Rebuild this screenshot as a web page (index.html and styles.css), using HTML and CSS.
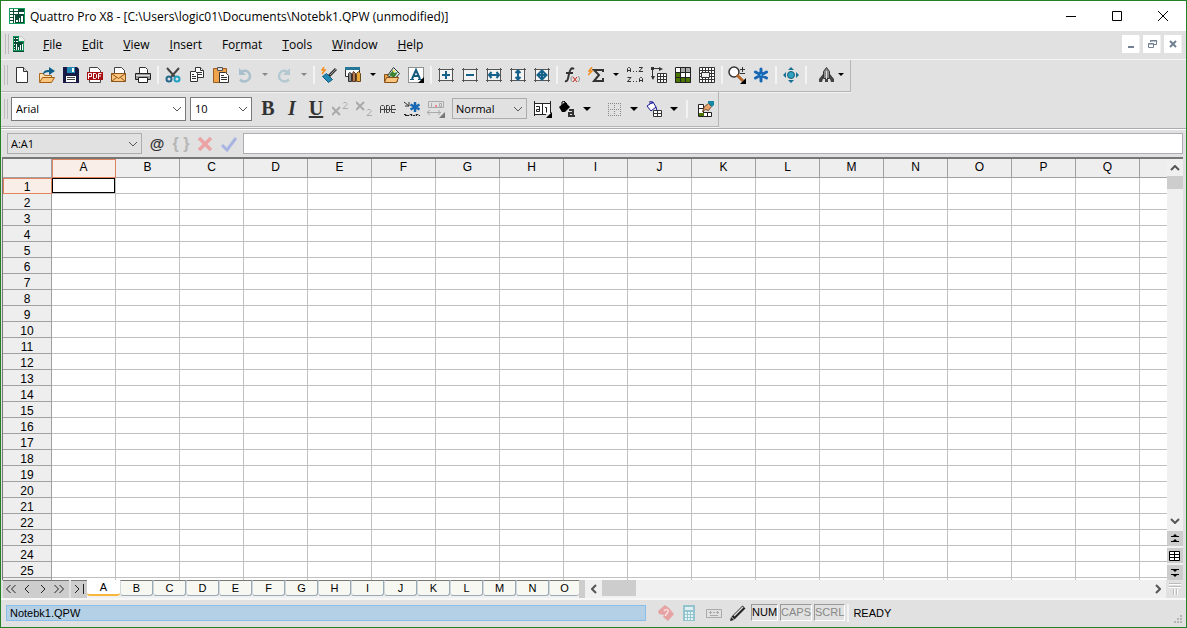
FILE: index.html
```html
<!DOCTYPE html>
<html lang="en">
<head>
<meta charset="utf-8">
<title>Quattro Pro X8</title>
<link rel="stylesheet" href="styles.css">
</head>
<body>
<div class="window">
  <header class="titlebar">
    <svg class="app-icon" viewBox="0 0 16 16" aria-hidden="true"><path fill="#14a05c" d="M0 0h16v16H0z"/><path fill="#0b4a35" d="M1 1h14v14H1z"/><path fill="#fff" d="M1 1h3v2H1zM5 1h4v2H5zM1 4h3v2H1zM5 4h4v2H5zM1 7h3v2H1zM1 10h3v2H1zM1 13h3v2H1zM5 7h1v8H5zM10 4h5v2h-5z"/><path fill="#fff" d="M7 12h2v2H7zM10 10h1v4h-1zM12 8h2v6h-2z"/></svg>
    <h1 class="title">Quattro Pro X8 - [C:\Users\logic01\Documents\Notebk1.QPW (unmodified)]</h1>
    <div class="caption-buttons">
      <button aria-label="Minimize"><svg viewBox="0 0 12 12"><path stroke="#000" d="M1 6.500h10"/></svg></button>
      <button aria-label="Maximize"><svg viewBox="0 0 12 12"><path fill="none" stroke="#000" d="M1.500 1.500h9v9h-9z"/></svg></button>
      <button aria-label="Close"><svg viewBox="0 0 12 12"><path stroke="#000" d="M1 1l10 10M11 1L1 11"/></svg></button>
    </div>
  </header>

  <nav class="menubar" aria-label="Menu">
    <span class="grip"></span>
    <svg class="doc-icon" viewBox="0 0 14 16" aria-hidden="true"><path fill="#eee" stroke="#c4c4c4" d="M6.500.500h3l3 3v3h-6z"/><path fill="#0b4a35" d="M1 0h6v5h5v11H1z"/><path fill="#fff" d="M2 2h1v1H2zM4 2h2v1H4zM2 5h1v1H2zM4 5h2v1H4zM2 8h1v1H2zM2 11h1v1H2zM2 13h1v1H2zM4 8h1v6H4zM6 11h1v3H6zM8 9h1v5H8zM10 8h1v6h-1z"/><path fill="none" stroke="#0c9a58" d="M1.500.500h5v5h5v9h-10z"/></svg>
    <div class="menus">
      <button><u>F</u>ile</button><button><u>E</u>dit</button><button><u>V</u>iew</button><button><u>I</u>nsert</button><button>Fo<u>r</u>mat</button><button><u>T</u>ools</button><button><u>W</u>indow</button><button><u>H</u>elp</button>
    </div>
    <div class="mdi-buttons">
      <button aria-label="Minimize notebook"><svg viewBox="0 0 12 12"><path fill="#718093" d="M3 8h6v2H3z"/></svg></button>
      <button aria-label="Restore notebook"><svg viewBox="0 0 12 12"><path fill="none" stroke="#718093" d="M4.500 4V2.500h6v4H8M4 3h7M2.500 5.500h5v4h-5zM2 6h6"/></svg></button>
      <button aria-label="Close notebook"><svg viewBox="0 0 12 12"><path stroke="#718093" stroke-width="2" d="M3 3l6 6M9 3L3 9"/></svg></button>
    </div>
  </nav>

  <div class="bars">
  <div class="toolbar standard" role="toolbar" aria-label="Notebook">
    <span class="grip"></span>
    <button aria-label="New"><svg viewBox="0 0 16 16"><path fill="#fff" stroke="#333" d="M1.500.500h7l4 4v11h-11z"/><path fill="#ddd" stroke="#333" d="M8.500.500v4h4"/></svg></button>
    <button aria-label="Open"><svg viewBox="0 0 16 16"><path fill="#ffe0b0" stroke="#b06a1c" d="M.500 14.500v-8h4l1 2h7v6z"/><path fill="#fbc57e" stroke="#a55d12" d="M.500 15.500l3-5h12l-3 5z"/><path fill="#0e5f8a" d="M4 8c0-4 2-5 6-5V0l6 4-6 4V5C7 5 5 6 4 8z"/></svg></button>
    <button aria-label="Save"><svg viewBox="0 0 16 16"><path fill="#171a45" d="M0 0h14l2 2v14H0z"/><path fill="#2589b5" d="M4 0h8v6H4z"/><path fill="#fff" d="M9 1h2v4H9zM3 9h10v6H3z"/><path stroke="#444" d="M4 10.500h8M4 12.500h8"/></svg></button>
    <button aria-label="Publish to PDF"><svg viewBox="0 0 16 16"><path fill="#fff" stroke="#444" d="M2.500.500h8l3 3v12h-11z"/><path fill="#a80f12" d="M0 5h16v8H0z"/><path fill="none" stroke="#fff" d="M1.500 12V6.500h3v3h-3M6.500 6v5.500h2l1-1v-3l-1-1h-2M11.500 12V6.500h3M11 9h3"/></svg></button>
    <button aria-label="E-mail"><svg viewBox="0 0 16 16"><path fill="#fff" stroke="#444" d="M3.500.500h7l3 3v10h-10z"/><path fill="#ffc47c" stroke="#8c551b" d="M.500 6.500h14v8H.500z"/><path fill="none" stroke="#8c551b" d="M.500 6.500l7 5 7-5M.500 14.500l5-4M14.500 14.500l-5-4"/></svg></button>
    <button aria-label="Print"><svg viewBox="0 0 16 16"><path fill="#fff" stroke="#333" d="M4.500.500h6l2 2v5h-8z"/><path fill="#999" stroke="#222" d="M.500 6.500h15v6H.500z"/><path stroke="#ddd" d="M1 8.500h14"/><path fill="#fff" stroke="#222" d="M3.500 10.500h9v5h-9z"/></svg></button>
    <span class="sep"></span>
    <button aria-label="Cut"><svg viewBox="0 0 16 16"><path stroke="#444" stroke-width="2" d="M2 1l8 9M14 1L6 10"/><g fill="none" stroke-width="2"><circle cx="4" cy="12" r="2.500" stroke="#24688c"/><circle cx="12" cy="12" r="2.500" stroke="#1fa0c5"/></g></svg></button>
    <button aria-label="Copy"><svg viewBox="0 0 16 16"><g fill="#fff" stroke="#333"><path d="M6.500.500h5l3 3v7h-8z"/><path d="M8 5.500h5M8 7.500h5M11.500.500v3h3"/><path d="M1.500 4.500h5l2 2v8h-7z"/><path d="M3 7.500h2M3 9.500h4M3 11.500h4"/></g></svg></button>
    <button aria-label="Paste"><svg viewBox="0 0 16 16"><path fill="#efa34b" stroke="#9b5a20" d="M.500 1.500h13v14H.500z"/><path fill="#ddd" stroke="#555" d="M4.500.500h5v3h-5z"/><path fill="#fff" stroke="#333" d="M6.500 5.500h6l3 3v7h-9z"/><path stroke="#333" d="M8 8.500h3M8 10.500h6M8 12.500h6"/></svg></button>
    <button aria-label="Undo" disabled><svg viewBox="0 0 16 16"><path fill="none" stroke="#a9c0cc" stroke-width="2.500" d="M5 4.500c5-2 8 1 8 5 0 3-3 5-6 5-2 0-3-1-4-2"/><path fill="#a9c0cc" d="M2 1v7h7z"/></svg></button>
    <button class="caret" aria-label="Undo list" disabled><svg viewBox="0 0 8 4"><path fill="#888" d="M1 0h6L4 3z"/></svg></button>
    <button aria-label="Redo" disabled><svg viewBox="0 0 16 16"><path fill="none" stroke="#b4c8d2" stroke-width="2.500" d="M11 4.500c-5-2-8 1-8 5 0 3 3 5 6 5 2 0 3-1 4-2"/><path fill="#b4c8d2" d="M14 1v7H7z"/></svg></button>
    <button class="caret" aria-label="Redo list" disabled><svg viewBox="0 0 8 4"><path fill="#888" d="M1 0h6L4 3z"/></svg></button>
    <span class="sep"></span>
    <button aria-label="QuickFormat"><svg viewBox="0 0 16 16"><path stroke="#333" stroke-width="3" d="M8 9l7-7"/><path stroke="#999" d="M9 8l6-6"/><path fill="#2589b5" stroke="#155c80" d="M1.500 9.500l4-3 6 6-4 3z"/><path fill="none" stroke="#f28c1c" stroke-width="1.500" d="M3 0L1 3h3L1 7"/></svg></button>
    <button aria-label="Insert chart"><svg viewBox="0 0 16 16"><path fill="#fff" stroke="#333" d="M.500.500h14v9H.500z"/><path fill="#257895" d="M0 0h15v3H0z"/><path fill="#888" stroke="#333" d="M3.500 14.500v-8l1-1 2 1v8z"/><path fill="#b07a52" stroke="#54301c" d="M7.500 14.500v-8l1-2 2 2v8z"/><path fill="#eba83b" stroke="#644c20" d="M11.500 14.500v-8l2-2 2 2v8z"/></svg></button>
    <button class="caret" aria-label="Chart list"><svg viewBox="0 0 8 4"><path d="M1 0h6L4 3z"/></svg></button>
    <button aria-label="Insert graphic"><svg viewBox="0 0 16 16"><path fill="#efa34b" stroke="#855018" d="M.500 14.500v-7h4l1 2h8v5z"/><path fill="#d9eef0" stroke="#333" d="M3.500 8.500l6-8 6 6-5 6z"/><path fill="#418335" d="M5 8l4-5 1 3 4-1-4 6z"/><path fill="#f3e34b" d="M9 3h2v2H9z"/><path fill="#fbc57e" stroke="#855018" d="M.500 15.500l2-5h12l-2 5z"/></svg></button>
    <button aria-label="Text box"><svg viewBox="0 0 16 16"><path fill="#fff" stroke="#333" stroke-dasharray="1 1" d="M.500.500h15v15H.500z"/><path fill="none" stroke="#155c80" stroke-width="2" d="M4 12l4-9 4 9M5 9h6"/><path stroke="#155c80" d="M2 12.500h4M10 12.500h4"/><path d="M16 10v6h-6z"/></svg></button>
    <span class="sep"></span>
    <button aria-label="Insert cells"><svg viewBox="0 0 16 16"><path class="frame" d="M0 2.500h16M0 13.500h16M1.500 1v14M14.500 1v14"/><path class="face" d="M2 3h12v10H2z"/><path class="mark" d="M4 8h8M8 4v8"/></svg></button>
    <button aria-label="Delete cells"><svg viewBox="0 0 16 16"><path class="frame" d="M0 2.500h16M0 13.500h16M1.500 1v14M14.500 1v14"/><path class="face" d="M2 3h12v10H2z"/><path class="mark" d="M4 8h8"/></svg></button>
    <button aria-label="Fit column"><svg viewBox="0 0 16 16"><path class="frame" d="M0 2.500h16M0 13.500h16M1.500 1v14M14.500 1v14"/><path class="face" d="M2 3h12v10H2z"/><path class="mark" d="M3 8h10M5.500 5L3 8l2.500 3M10.500 5L13 8l-2.500 3"/></svg></button>
    <button aria-label="Fit row"><svg viewBox="0 0 16 16"><path class="frame" d="M0 2.500h16M0 13.500h16M1.500 1v14M14.500 1v14"/><path class="face" d="M2 3h12v10H2z"/><path class="mark" d="M8 3v10M5.500 6L8 3.500l2.500 2.500M5.500 10L8 12.500l2.500-2.500"/></svg></button>
    <button aria-label="Fit all"><svg viewBox="0 0 16 16"><path class="frame" d="M0 2.500h16M0 13.500h16M1.500 1v14M14.500 1v14"/><path class="face" d="M2 3h12v10H2z"/><path class="mark" d="M3 8h10M8 3v10M3.500 8L8 3.500l4.500 4.500L8 12.500z"/></svg></button>
    <span class="sep"></span>
    <button aria-label="Formula composer"><svg viewBox="0 0 16 16"><path fill="none" stroke="#333" stroke-width="2" d="M10 2C7 0 6 3 5 7s-1 8-4 7M2 6h7"/><path stroke="#c21" fill="none" d="M9 10l4 5M13 10l-4 5"/><path stroke="#888" fill="none" d="M8.500 9c-2 2-2 4 0 6M14 9c2 2 2 4 0 6"/></svg></button>
    <button aria-label="QuickSum"><svg viewBox="0 0 16 16"><path fill="none" stroke="#333" stroke-width="2" d="M15 5V3H6l5 5-5 6h9v-3"/><path fill="none" stroke="#f28c1c" stroke-width="1.500" d="M4 0L1 4h3L0 8"/></svg></button>
    <button class="caret" aria-label="Sum list"><svg viewBox="0 0 8 4"><path d="M1 0h6L4 3z"/></svg></button>
    <button aria-label="Sort"><svg viewBox="0 0 16 16"><path fill="none" stroke="#333" d="M.500 5V1.500l1-1h1l1 1V5M1 3.500h3M12 .500h3.500L12 4.500h4M.500 10.500H4L.500 14.500H4M12.500 15v-3.500l1-1h1l1 1V15M13 13.500h3M6 4.500h1M9 4.500h1M6 14.500h1M9 14.500h1"/></svg></button>
    <button aria-label="SpeedFill"><svg viewBox="0 0 16 16"><path fill="#fff" stroke="#333" d="M6.500 6.500h9v9h-9zM9.500 6.500v9M12.500 6.500v9M6.500 9.500h9M6.500 12.500h9"/><path fill="none" stroke="#333" d="M1.500 12V1.500H9"/><path fill="#333" d="M8 0l4 2-4 2zM0 9h4l-2 4zM0 0h3v3H0z"/></svg></button>
    <button aria-label="SpeedFormat"><svg viewBox="0 0 16 16"><path fill="#fff" d="M0 0h16v16H0z"/><path fill="#aaa" d="M6 0h10v5H6z"/><path fill="#4c7500" d="M0 5h5v11H0zM5 11h11v5H5z"/><path fill="none" stroke="#222" d="M.500.500h15v15H.500zM5.500 0v16M10.500 0v16M0 5.500h16M0 10.500h16"/></svg></button>
    <button aria-label="QuickCell"><svg viewBox="0 0 16 16"><path fill="#fff" stroke="#333" d="M.500.500h15v15H.500zM3.500 0v16M6.500 0v16M9.500 0v16M12.500 0v16M0 3.500h16M0 12.500h16M0 6.500h16M0 9.500h16"/><path fill="#eee" stroke="#333" d="M2.500 5.500h8v5h-8z"/></svg></button>
    <span class="sep"></span>
    <button aria-label="Zoom"><svg class="wide" viewBox="0 0 18 18"><circle cx="6" cy="6" r="5" fill="#fff" stroke="#333" stroke-width="1.500"/><path stroke="#b5682a" stroke-width="3" d="M9 9l6 6"/><path d="M18 12v6h-6z"/><path stroke="#333" d="M12 3.500h5M14.500 1v5M12 7.500h5"/></svg></button>
    <button aria-label="Favorites"><svg viewBox="0 0 16 16"><path stroke="#1767b5" stroke-width="3" stroke-linecap="round" d="M8 2v12M2.500 5l11 6M13.500 5l-11 6"/><path fill="#38a0dd" d="M7 7h2v2H7z"/></svg></button>
    <span class="sep"></span>
    <button aria-label="Browse"><svg viewBox="0 0 16 16"><circle cx="8" cy="8" r="3.500" fill="#2fa0c0" stroke="#175e78"/><path fill="#176f91" d="M5 3l3-3 3 3zM5 13l3 3 3-3zM3 5L0 8l3 3zM13 5l3 3-3 3z"/></svg></button>
    <span class="sep"></span>
    <button class="rocket" aria-label="Launch"><svg viewBox="0 0 26 16"><path fill="#888" stroke="#333" d="M4.500 11.500v-7l3-4 3 4v7z"/><path stroke="#ddd" d="M7.500 4v8"/><path fill="#444" d="M4 7v5l-1 3H0v-3zM11 7v5l1 3h3v-3zM6 12h3v3H6z"/><path d="M19 6h6l-3 3z"/></svg></button>
  </div>

  <div class="toolbar property" role="toolbar" aria-label="Property bar">
    <span class="grip"></span>
    <label class="combo font-combo"><select aria-label="Font"><option>Arial</option></select><svg viewBox="0 0 10 6"><path d="M1 1l4 4 4-4"/></svg></label>
    <label class="combo size-combo"><select aria-label="Font size"><option>10</option></select><svg viewBox="0 0 10 6"><path d="M1 1l4 4 4-4"/></svg></label>
    <div class="tools">
    <button class="letter" aria-label="Bold"><b>B</b></button>
    <button class="letter" aria-label="Italic"><i>I</i></button>
    <button class="letter" aria-label="Underline"><u>U</u></button>
    <button aria-label="Superscript" disabled><svg viewBox="0 0 16 16"><path fill="none" stroke="#aaa" stroke-width="2" d="M0 6l8 8M8 6l-8 8"/><path fill="none" stroke="#aaa" d="M11 2.500l1-1h2l1 1v1l-4 4h5"/></svg></button>
    <button aria-label="Subscript" disabled><svg viewBox="0 0 16 16"><path fill="none" stroke="#aaa" stroke-width="2" d="M0 1l8 8M8 1l-8 8"/><path fill="none" stroke="#aaa" d="M11 9.500l1-1h2l1 1v1l-4 4h5"/></svg></button>
    <button aria-label="Strikethrough"><svg viewBox="0 0 16 16"><path fill="none" stroke="#444" d="M.500 12V5.500l1-1h2l1 1V12M6.500 4v7.500h2l1-1v-5l-1-1h-2M15 4.500h-3.500v7H15M0 8.500h16"/></svg></button>
    <button aria-label="QuickStyle"><svg viewBox="0 0 16 16"><path stroke="#1767b5" stroke-width="2.500" d="M11 1v10M6.500 3.500l9 5M15.500 3.500l-9 5"/><path fill="none" stroke="#333" d="M0 1l5 4M5 1v4H1"/><path fill="none" stroke="#222" d="M0 13.500h2l1 1h2l1-1h2l1 1h2l1-1h2l1 1h1M1 14.500h2M7 14.500h1M12 14.500h1"/></svg></button>
    <button aria-label="Numeric format" disabled><svg class="wide" viewBox="0 0 18 18"><path fill="none" stroke="#aaa" d="M1.500 1.500h15v6h-15zM4.500 3v4M12.500 3.500h2v3h-2zM0 12.500h14M3 10l-3 2.500L3 15M12 10v5"/><path fill="#777" d="M18 12v6h-6z"/><path fill="#e88" d="M8 5h2v2H8z"/></svg></button>
    </div>
    <label class="combo style-combo"><select aria-label="Style"><option>Normal</option></select><svg viewBox="0 0 10 6"><path d="M1 1l4 4 4-4"/></svg></label>
    <div class="tools alignment">
    <button aria-label="Align"><svg class="wide" viewBox="0 0 18 18"><path fill="#fff" d="M1 3h15v11H1z"/><path fill="none" stroke="#222" d="M.500 1v15M16.500 1v12M8.500 3v11M0 3.500h17M0 14.500h12M2 6.500h3.500v5H2.500v-2h3M11 7.500h1.500v5"/><path d="M18 12v6h-6z"/></svg></button>
    <button aria-label="Text color"><svg viewBox="0 0 16 16"><path d="M0 6l6-5 5 5-5 5H3z"/><path fill="none" stroke="#000" d="M3 4V1l2-1 3 3M2 6l3-3"/><path fill="none" stroke="#333" stroke-width="2" d="M10 9h4v6h-4v-3h4M15 15h1"/></svg></button>
    <button class="caret" aria-label="Text color list"><svg viewBox="0 0 8 4"><path d="M0 0h8L4 4z"/></svg></button>
    </div>
    <div class="tools">
    <button aria-label="Borders"><svg viewBox="0 0 16 16"><path fill="none" stroke="#888" stroke-dasharray="1 1" d="M2 2.500h13M2 8.500h13M2 14.500h13M2.500 2v13M8.500 2v13M14.500 2v13"/></svg></button>
    <button class="caret" aria-label="Border list"><svg viewBox="0 0 8 4"><path d="M0 0h8L4 4z"/></svg></button>
    <button class="fill-button" aria-label="Fill color"><svg viewBox="0 0 16 16"><path fill="#fff" stroke="#151594" d="M1 5l6-4 3 5-5 4zM4 3V0h2v3M10 6l1 4"/><path fill="#fff" stroke="#333" d="M7.500 9.500h8v6h-8zM11.500 9v7M7 12.500h9"/></svg></button>
    <button class="caret" aria-label="Fill list"><svg viewBox="0 0 8 4"><path d="M0 0h8L4 4z"/></svg></button>
    <span class="sep"></span>
    <button aria-label="Cell properties"><svg viewBox="0 0 16 16"><path fill="#fff" stroke="#222" d="M.500 3.500h5v12h-5zM5.500 11.500h8v4h-8zM.500 7.500h5M9.500 11v5"/><path fill="#4c7500" d="M1 12h5v3H1z"/><path fill="#e5a56c" stroke="#77492f" d="M4.500 10.500l2-5 4-3 3 3-3 4-3-1z"/><path fill="#1588a5" d="M10 0h6v4l-2 2-4-4z"/></svg></button>
    </div>
  </div>
  </div>

  <div class="formula-bar">
    <label class="combo name-combo"><select aria-label="Cell address"><option>A:A1</option></select><svg viewBox="0 0 10 6"><path d="M1 1l4 4 4-4"/></svg></label>
    <div class="tools">
    <button class="at" aria-label="Functions">@</button>
    <button class="braces" aria-label="Macros" disabled>{ }</button>
    <button aria-label="Cancel" disabled><svg viewBox="0 0 16 16"><path stroke="#eba3a3" stroke-width="3.500" d="M2 2l12 12M14 2L2 14"/></svg></button>
    <button aria-label="Enter" disabled><svg viewBox="0 0 16 16"><path fill="none" stroke="#a8b5e2" stroke-width="3" d="M1 9l5 5 9-12"/></svg></button>
    </div>
    <input class="entry" type="text" aria-label="Cell contents">
  </div>

  <main class="sheet">
    <div class="grid-clip"><table class="grid" id="grid" aria-label="Sheet A"></table></div>
    <div class="vscroll">
      <button aria-label="Scroll up"><svg viewBox="0 0 10 6"><path d="M1 5l4-4 4 4"/></svg></button>
      <div class="vtrack"><div class="vthumb"></div></div>
      <button aria-label="Scroll down"><svg viewBox="0 0 10 6"><path d="M1 1l4 4 4-4"/></svg></button>
      <button class="jump" aria-label="Previous object"><svg viewBox="0 0 12 12"><path fill="#000" d="M6 1l2 2H4zM2 3h8v1H2zM6 6l2 2H4zM2 8h8v1H2z"/></svg></button>
      <button class="jump" aria-label="Browse by"><svg viewBox="0 0 12 12"><path class="table-glyph" d="M.500 1.500h10v9H.500zM5.500 1v10M0 4.500h11M0 7.500h11"/></svg></button>
      <button class="jump" aria-label="Next object"><svg viewBox="0 0 12 12"><path fill="#000" d="M2 2h8v1H2zM4 3h4L6 5zM2 7h8v1H2zM4 8h4l-2 2z"/></svg></button>
    </div>
  </main>

  <div class="tab-row">
    <div class="tab-nav">
      <button aria-label="First"><svg viewBox="0 0 12 10"><path d="M5.500 1l-4 4 4 4M10.500 1l-4 4 4 4"/></svg></button>
      <button aria-label="Previous"><svg viewBox="0 0 12 10"><path d="M8 1L4 5l4 4"/></svg></button>
      <button aria-label="Next"><svg viewBox="0 0 12 10"><path d="M4 1l4 4-4 4"/></svg></button>
      <button aria-label="Last"><svg viewBox="0 0 12 10"><path d="M1.500 1l4 4-4 4M6.500 1l4 4-4 4"/></svg></button>
    </div>
    <div class="tab-nav tab-end"><button aria-label="Last sheet"><svg viewBox="0 0 12 10"><path d="M2 1l4 4-4 4M10.500 0v10"/></svg></button></div>
    <div class="tabs" role="tablist">
      <button class="tab active" role="tab" aria-selected="true">A</button><button class="tab" role="tab">B</button><button class="tab" role="tab">C</button><button class="tab" role="tab">D</button><button class="tab" role="tab">E</button><button class="tab" role="tab">F</button><button class="tab" role="tab">G</button><button class="tab" role="tab">H</button><button class="tab" role="tab">I</button><button class="tab" role="tab">J</button><button class="tab" role="tab">K</button><button class="tab" role="tab">L</button><button class="tab" role="tab">M</button><button class="tab" role="tab">N</button><button class="tab last" role="tab">O</button>
    </div>
    <span class="splitter"></span>
    <div class="hscroll">
      <button aria-label="Scroll left"><svg viewBox="0 0 6 10"><path d="M5 1L1 5l4 4"/></svg></button>
      <div class="hthumb"></div>
      <button class="right" aria-label="Scroll right"><svg viewBox="0 0 6 10"><path d="M1 1l4 4-4 4"/></svg></button>
    </div>
    <svg class="corner" viewBox="0 0 16 17" aria-hidden="true"><path stroke="#bbb" d="M2 3.500h12M2 6.500h12M6.500 9v6M9.500 9v6"/><path stroke="#fff" d="M2 4.500h12M2 7.500h12M7.500 9v6M10.500 9v6"/></svg>
  </div>

  <footer class="statusbar">
    <div class="document-name">Notebk1.QPW</div>
    <svg class="status-icon" viewBox="0 0 16 16" aria-hidden="true"><path fill="#e6a2a2" d="M7 0l4 3 4 5 1 1-6 7-5-4 1-2-5-1-1-3z"/><path fill="none" stroke="#f6dede" stroke-width="1.500" d="M6 6c2-3 5-1 4 1l-3 4"/></svg>
    <svg class="status-icon" viewBox="0 0 16 16" aria-hidden="true"><path fill="#94c4ce" d="M1 0h12v16H1z"/><path fill="#def0f2" d="M3 2h8v3H3z"/><path stroke="#e8f5f7" stroke-width="2" stroke-dasharray="2 1" d="M3 8h8M3 11h8M3 14h8"/></svg>
    <svg class="status-icon" viewBox="0 0 16 16" aria-hidden="true"><path fill="none" stroke="#aaa" d="M.500 4.500h15v8H.500zM3 7.500h3M10 7.500h3M4.500 6v3M11.500 6v3M7 7.500h2M4 10.500h8"/></svg>
    <svg class="status-icon" viewBox="0 0 16 16" aria-hidden="true"><path stroke="#222" stroke-width="4" d="M3 13L14 2"/><path stroke="#ddd" stroke-width="1.500" d="M4 11L13 2"/><path fill="#222" d="M0 16l1-4 3 3z"/></svg>
    <div class="keys"><span class="key on">NUM</span><span class="key">CAPS</span><span class="key">SCRL</span></div>
    <span class="sep"></span>
    <span class="mode">READY</span>
    <svg class="resize" viewBox="0 0 9 9" aria-hidden="true"><path fill="#b5b5b5" d="M6 0h2v2H6zM3 3h2v2H3zM6 3h2v2H6zM0 6h2v2H0zM3 6h2v2H3zM6 6h2v2H6z"/></svg>
  </footer>
</div>
<script src="grid.js"></script>
</body>
</html>
```
FILE: styles.css
```css
* { box-sizing: border-box; }
body { margin: 0; font: 12px "Open Sans", "Noto Sans", sans-serif; color: #000; }
button { padding: 0; border: 0; background: none; font: inherit; color: inherit; display: flex; align-items: center; justify-content: center; }
svg { display: block; flex: none; }

.window { height: 100vh; display: flex; flex-direction: column; background: #e1e1e1; border: 1px solid #268026; overflow: hidden; }

.titlebar { height: 30px; flex: none; display: flex; align-items: center; background: #fff; padding-left: 8px; }
.app-icon { width: 16px; height: 16px; }
.title { margin: 0 0 0 5px; font-size: 12px; font-weight: 400; white-space: nowrap; flex: 1; }
.caption-buttons { display: flex; }
.caption-buttons button { width: 46px; height: 30px; }
.caption-buttons svg { width: 12px; height: 12px; }

.menubar { height: 28px; flex: none; display: flex; align-items: center; padding: 0 4px 2px; }
.grip { width: 4px; height: 20px; flex: none; border-left: 1px solid #bbb; border-right: 1px solid #bbb; margin-right: 3px; }
.doc-icon { width: 14px; height: 16px; }
.menus { display: flex; flex: 1; margin-left: 7px; }
.menus button { padding: 0 10px; height: 20px; }
u { text-underline-offset: 1px; }
.mdi-buttons { display: flex; gap: 3px; }
.mdi-buttons button { width: 18px; height: 18px; background: #fff; border-right: 1px solid #f0f0f0; }
.mdi-buttons svg { width: 12px; height: 12px; }

.bars { flex: none; height: 70px; border-top: 1px solid #f5f5f5; border-bottom: 1px solid #aaa; display: flex; flex-direction: column; align-items: flex-start; }
.toolbar { display: flex; align-items: center; border-right: 1px solid #b5b5b5; border-bottom: 1px solid #b5b5b5; box-shadow: 0 1px #f2f2f2; padding-left: 3px; }
.standard { height: 32px; padding-bottom: 1px; }
.property { height: 35px; padding-bottom: 1px; }
.toolbar button, .tools button { width: 24px; height: 24px; flex: none; }
.toolbar button svg, .tools button svg { width: 16px; height: 16px; }
.toolbar button .wide { width: 18px; height: 18px; }
.toolbar .caret { width: 15px; }
.toolbar .caret svg { width: 8px; height: 4px; }
.toolbar .rocket { width: 41px; padding-left: 5px; }
.toolbar .rocket svg { width: 26px; }
.sep { width: 2px; height: 18px; margin: 0 2px; background: #f3f3f3; flex: none; }
.property .sep { margin: 0 6px 0 5px; }
.frame { stroke: #555; }
.face { fill: #f4f4f4; }
.mark { fill: none; stroke: #17628a; stroke-width: 2; }
.tools { display: flex; align-items: center; }
.alignment { margin: 0 8px 0 4px; }
.toolbar .fill-button { margin-left: 1px; }
.property .tools .letter { font: bold 20px "Liberation Serif", serif; color: #333; }

.combo { display: grid; grid-template-columns: 1fr 18px; align-items: center; flex: none; }
.combo select { grid-area: 1 / 1 / 2 / 3; width: 100%; height: 100%; appearance: none; border: 1px solid #7a7a7a; border-radius: 0; background: #fff; font: 11px "Open Sans", "Noto Sans", sans-serif; color: #000; padding: 0 4px; }
.combo svg { grid-area: 1 / 2; justify-self: center; width: 10px; height: 6px; fill: none; stroke: #555; pointer-events: none; }
.font-combo { width: 175px; height: 24px; margin-right: 4px; }
.size-combo { width: 62px; height: 24px; margin-right: 4px; }
.style-combo { width: 75px; height: 21px; margin-left: 4px; }
.style-combo select, .name-combo select { background: #e1e1e1; border-color: #adadad; padding: 0 3px; }

.formula-bar { flex: none; height: 28px; display: flex; align-items: center; border-top: 1px solid #fff; padding: 0 3px 0 6px; }
.name-combo { width: 135px; height: 21px; margin-right: 3px; }
.tools .at { font: bold 15px "Liberation Sans", sans-serif; color: #333; }
.tools .braces { font: bold 16px "Liberation Sans", sans-serif; color: #b5b5b5; white-space: nowrap; }
.entry { flex: 1; min-width: 0; height: 21px; margin-left: 2px; border: 1px solid #abadb3; border-radius: 0; background: #fff; font: inherit; }

.sheet { flex: 1; min-height: 0; display: flex; border-top: 2px solid #777; border-left: 1px solid #777; margin: 0 3px 0 1px; background: #fff; overflow: hidden; }
.grid-clip { flex: 1; min-width: 0; overflow: hidden; }
.grid { border-collapse: separate; border-spacing: 0; table-layout: fixed; width: 1201px; font: 12px "Liberation Sans", Arial, sans-serif; }
.grid th, .grid td { padding: 3px 0 0; height: 16px; line-height: 12px; border-right: 1px solid #c0c0c0; border-bottom: 1px solid #c0c0c0; }
.grid th { background: #eee; font-weight: 400; border-color: #a0a0a0; text-align: center; }
.grid thead th { height: 19px; line-height: 16px; padding: 0 0 2px; }
.grid .row-head { width: 49px; }
.grid thead .selected, .grid tbody .selected { background: #f9eee8; border-color: #e2835f; box-shadow: inset 1px 1px #e2835f; }
.grid .cursor { box-shadow: inset 0 0 0 1px #000; }

.vscroll { width: 16px; flex: none; display: flex; flex-direction: column; background: #f0f0f0; }
.vscroll button { height: 17px; flex: none; }
.vscroll svg { width: 10px; height: 6px; fill: none; stroke: #555; stroke-width: 2; }
.vtrack { flex: 1; }
.vthumb { height: 13px; background: #cdcdcd; }
.vscroll .jump { height: 17px; background: #cdcdcd; border-top: 2px solid #f0f0f0; }
.vscroll .jump svg { width: 12px; height: 12px; stroke: none; }
.vscroll .table-glyph { fill: #fff; stroke: #000; stroke-width: 1; }

.tab-row { height: 18px; flex: none; display: flex; margin: 0 3px 0 2px; background: #e1e1e1; }
.tab-nav { display: flex; flex: none; background: #cdcdcd; border-top: 1px solid #777; }
.tab-nav button { width: 16px; height: 16px; }
.tab-nav svg { width: 12px; height: 10px; fill: none; stroke: #222; }
.tab-nav:first-child { padding-right: 2px; }
.tab-end { margin-left: 2px; }
.tabs { display: flex; flex: none; background: #f0f0f0; }
.tab { width: 33px; height: 16px; border: 1px solid #9aaab5; border-top-color: #777; border-left-color: #d0d8dd; border-radius: 0 0 3px 3px; background: #f7f8f2; font: 11px "Liberation Sans", Arial, sans-serif; }
.tab.active { background: #fff; border: 0; border-bottom: 2px solid #f6b73c; }
.tab.last { width: 30px; border-right: 0; }
.splitter { width: 6px; background: #cdcdcd; flex: none; }
.hscroll { flex: 1; min-width: 0; display: flex; background: #f0f0f0; margin-right: 1px; }
.hscroll button { width: 17px; height: 17px; flex: none; }
.hscroll svg { width: 6px; height: 10px; fill: none; stroke: #555; stroke-width: 2; }
.hthumb { width: 34px; height: 16px; background: #cdcdcd; }
.hscroll .right { margin-left: auto; }
.corner { width: 16px; height: 17px; }

.statusbar { height: 29px; flex: none; display: flex; align-items: center; border-top: 2px solid #f7f7f7; padding: 0 0 2px 5px; font: 11px "Liberation Sans", Arial, sans-serif; }
.document-name { flex: 0 1 640px; height: 16px; line-height: 14px; padding-left: 3px; border: 1px solid #89bfe8; background: #b4d0e7; margin-right: 12px; }
.status-icon { width: 16px; height: 16px; margin-right: 8px; }
.status-icon:nth-last-of-type(2) { margin-right: 5px; }
.keys { display: flex; gap: 2px; }
.key { height: 17px; line-height: 15px; border: 1px solid; border-color: #999 #fff #fff #999; color: #888; }
.key.on { color: #000; }
.statusbar .sep { height: 18px; margin: 0 4px 0 2px; }
.resize { width: 9px; height: 9px; margin: auto 3px 1px auto; }
```
FILE: grid.js
```js
const letters = "ABCDEFGHIJKLMNOPQ";
const rows = 25;
const grid = document.getElementById("grid");

const head = grid.createTHead().insertRow();
function addHeader(row, text, className) {
  const th = document.createElement("th");
  th.textContent = text;
  th.className = className;
  row.append(th);
}
addHeader(head, "", "row-head");
for (const letter of letters) addHeader(head, letter, letter === "A" ? "selected" : "");
addHeader(head, "", "");

const body = grid.createTBody();
for (let r = 1; r <= rows + 1; r++) {
  const row = body.insertRow();
  addHeader(row, r <= rows ? r : "", r === 1 ? "row-head selected" : "row-head");
  for (let c = 0; c <= letters.length; c++) {
    const cell = row.insertCell();
    if (r === 1 && c === 0) cell.className = "cursor";
  }
}
```
